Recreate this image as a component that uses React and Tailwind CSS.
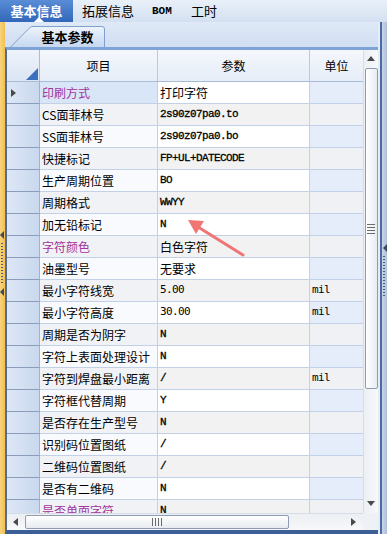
const rows = [
  ['印刷方式', '打印字符', '', 'cn', true],
  ['CS面菲林号', '2s90z07pa0.to', '', 'serif'],
  ['SS面菲林号', '2s90z07pa0.bo', '', 'serif'],
  ['快捷标记', 'FP+UL+DATECODE', '', 'serif'],
  ['生产周期位置', 'BO', '', 'serif'],
  ['周期格式', 'WWYY', '', 'serif'],
  ['加无铅标记', 'N', '', 'serif'],
  ['字符颜色', '白色字符', '', 'cn', true],
  ['油墨型号', '无要求', '', 'cn'],
  ['最小字符线宽', '5.00', 'mil', 'sans'],
  ['最小字符高度', '30.00', 'mil', 'sans'],
  ['周期是否为阴字', 'N', '', 'serif'],
  ['字符上表面处理设计', 'N', '', 'serif'],
  ['字符到焊盘最小距离', '/', 'mil', 'serif'],
  ['字符框代替周期', 'Y', '', 'serif'],
  ['是否存在生产型号', 'N', '', 'serif'],
  ['识别码位置图纸', '/', '', 'serif'],
  ['二维码位置图纸', '/', '', 'serif'],
  ['是否有二维码', 'N', '', 'serif'],
  ['是否单面字符', 'N', '', 'serif', true],
]

const cn = 'font-["Noto_Sans_CJK_SC",sans-serif]'

function Tri({ dir, className }) {
  const pts = {
    up: '0,6 4,1 8,6',
    down: '0,1 4,6 8,1',
    left: '6,0 1,4 6,8',
    right: '1,0 6,4 1,8',
  }[dir]
  return (
    <svg width="8" height="8" viewBox="0 0 8 8" className={className}>
      <polygon points={pts} fill="#4a4a4a" />
    </svg>
  )
}

function Grip() {
  return (
    <div className="flex flex-col items-center gap-[2px]">
      {[...Array(14)].map((_, i) => (
        <div key={i} className="w-[2px] h-[1px] bg-[#4a5f80]" />
      ))}
    </div>
  )
}

function Row({ r, i }) {
  const [label, value, unit, kind, purple] = r
  const odd = i % 2 === 1
  const valFont =
    kind === 'cn'
      ? `${cn} text-[12px]`
      : kind === 'sans'
      ? 'font-["DejaVu_Sans_Mono",monospace] text-[11px] tracking-[-0.6px]'
      : 'font-["Liberation_Mono",monospace] text-[11px] tracking-[-0.6px] [-webkit-text-stroke:0.3px_black]'
  return (
    <div className="flex h-[22px] shrink-0">
      <div className="w-[33px] flex items-center pl-[3px] bg-gradient-to-r from-[#dde7f6] to-[#c9d8ee] border-b border-[#8b9dba] border-r border-r-[#9fb3d1]">
        {i === 0 && <Tri dir="right" />}
      </div>
      <div
        className={`w-[118px] flex items-center pl-[2px] border-b border-r border-[#c2d1e5] ${cn} text-[12px] whitespace-nowrap overflow-hidden ${
          purple ? 'text-[#a2339e]' : 'text-black'
        } ${i === 0 ? 'bg-[#d8e6f7]' : odd ? 'bg-[#f0f2f6]' : 'bg-[#f9fafd]'}`}
      >
        {label}
      </div>
      <div
        className={`w-[152px] flex items-center pl-[2px] border-b border-r border-[#c2d1e5] text-black whitespace-nowrap ${valFont} ${
          odd ? 'bg-[#f2f2f2]' : 'bg-white'
        }`}
      >
        {value}
      </div>
      <div
        className={`w-[53px] flex items-center pl-[2px] border-b border-[#c2d1e5] font-["DejaVu_Sans_Mono",monospace] text-[11px] tracking-[-0.6px] text-black ${
          odd ? 'bg-[#eff1f4]' : 'bg-[#e4edf9]'
        }`}
      >
        {unit}
      </div>
    </div>
  )
}

export default function App() {
  return (
    <div className={`relative w-[387px] h-[534px] overflow-hidden bg-[#dde8f6] ${cn}`}>
      {/* Menu */}
      <div className="flex items-stretch h-[22px] bg-gradient-to-b from-[#e9f0f9] to-[#d3e0f1] text-[13px]">
        <div className="relative w-[73px] flex items-center justify-center bg-gradient-to-b from-[#5a8dd6] to-[#3267ba] text-white font-bold">
          基本信息
          <div className="absolute bottom-0 left-[34px] w-0 h-0 border-l-[5px] border-r-[5px] border-b-[5px] border-l-transparent border-r-transparent border-b-white" />
        </div>
        <div className="flex items-center pl-[9px] w-[79px] text-black">拓展信息</div>
        <div className="flex items-center w-[39px] font-['Liberation_Mono',monospace] text-[11px] font-bold text-black">BOM</div>
        <div className="flex items-center text-black">工时</div>
      </div>

      <div className="flex h-[512px]">
        {/* left dock strip */}
        <div className="relative w-[5px] bg-gradient-to-r from-[#f9d47a] to-[#f2bf52]">
          <div className="absolute left-0 top-[209px]"><svg width="4" height="8"><polygon points="4,0 0,4 4,8" fill="#3c4a60" /></svg></div>
          <div className="absolute left-[1px] top-[221px]"><Grip /></div>
          <div className="absolute left-0 top-[266px]"><svg width="4" height="8"><polygon points="4,0 0,4 4,8" fill="#3c4a60" /></svg></div>
        </div>

        <div className="flex flex-col w-[373px]">
          {/* sub-tab row */}
          <div className="h-[25px] flex items-end bg-gradient-to-b from-[#dfe9f7] to-[#d0def2] pl-[5px]">
            <div className="relative h-[21px] w-[95px]">
              <svg width="95" height="21" className="absolute inset-0">
                <defs>
                  <linearGradient id="tg" x1="0" y1="0" x2="0" y2="1">
                    <stop offset="0" stopColor="#eef4fc" />
                    <stop offset="1" stopColor="#c6d8f0" />
                  </linearGradient>
                </defs>
                <path d="M0.5,21 L20,1.5 Q21,0.5 23,0.5 L92,0.5 Q94.5,0.5 94.5,3 L94.5,21" fill="url(#tg)" stroke="#7f9fcc" />
              </svg>
              <div className="absolute inset-0 flex items-center justify-center pl-[20px] pt-[1px] text-[13px] font-bold text-black">
                基本参数
              </div>
            </div>
          </div>

          {/* grid */}
          <div className="flex-1 flex flex-col border-t-[3px] border-[#7ea3d6] border-l-2 border-l-[#5b6c88] border-b-4 border-b-[#3d5f98]">
            <div className="flex h-[463px]">
              <div className="w-[356px] flex flex-col overflow-hidden bg-white">
                {/* header */}
                <div className="flex h-[32px] shrink-0 bg-gradient-to-b from-[#f4f7fc] to-[#e6edf7] border-b border-[#a9bcd8] text-[12px] text-black">
                  <div className="relative w-[33px] bg-gradient-to-b from-[#eef3fb] to-[#dbe5f4] border-r border-[#a9bcd8]">
                    <svg width="12" height="12" className="absolute right-[1px] bottom-[1px]">
                      <polygon points="12,0 12,12 0,12" fill="#3d6fc0" />
                    </svg>
                  </div>
                  <div className="w-[118px] flex items-center justify-center border-r border-[#b9c9de]">项目</div>
                  <div className="w-[152px] flex items-center justify-center border-r border-[#b9c9de]">参数</div>
                  <div className="w-[53px] flex items-center justify-center">单位</div>
                </div>
                {rows.map((r, i) => (
                  <Row key={i} r={r} i={i} />
                ))}
              </div>

              {/* vertical scrollbar */}
              <div className="w-[15px] flex flex-col items-center bg-gradient-to-r from-[#eceff3] to-[#f7f8fa] border-l border-[#d6dde7]">
                <div className="h-[18px] flex items-center justify-center"><Tri dir="up" /></div>
                <div className="w-[13px] h-[321px] rounded-[2px] border border-[#8e9bb0] bg-gradient-to-r from-white to-[#e7ebf0] flex items-center justify-center">
                  <div className="flex flex-col gap-[2px]">
                    <div className="w-[8px] h-[1px] bg-[#6b6b6b]" />
                    <div className="w-[8px] h-[1px] bg-[#6b6b6b]" />
                    <div className="w-[8px] h-[1px] bg-[#6b6b6b]" />
                    <div className="w-[8px] h-[1px] bg-[#6b6b6b]" />
                  </div>
                </div>
                <div className="flex-1" />
                <div className="h-[18px] flex items-center justify-center"><Tri dir="down" /></div>
              </div>
            </div>

            {/* horizontal scrollbar */}
            <div className="flex h-[17px]">
              <div className="w-[356px] flex items-center bg-gradient-to-b from-[#eceff3] to-[#f7f8fa] border-t border-[#d6dde7]">
                <div className="w-[18px] flex justify-center"><Tri dir="left" /></div>
                <div className="w-[264px] h-[14px] rounded-[2px] border border-[#8e9bb0] bg-gradient-to-b from-white to-[#e7ebf0] flex items-center justify-center gap-[2px]">
                  <div className="w-[1px] h-[8px] bg-[#6b6b6b]" />
                  <div className="w-[1px] h-[8px] bg-[#6b6b6b]" />
                  <div className="w-[1px] h-[8px] bg-[#6b6b6b]" />
                  <div className="w-[1px] h-[8px] bg-[#6b6b6b]" />
                </div>
                <div className="flex-1" />
                <div className="w-[18px] flex justify-center"><Tri dir="right" /></div>
              </div>
              <div className="w-[15px] bg-[#eef1f5]" />
            </div>
          </div>
        </div>

        {/* right dock strip */}
        <div className="flex w-[9px]">
          <div className="w-[2px] bg-[#e6edf6]" />
          <div className="w-[2px] bg-[#4a6ca6]" />
          <div className="relative w-[5px] bg-gradient-to-r from-[#c9d6e8] to-[#aebfd8]">
            <div className="absolute left-[1px] top-[222px]"><svg width="4" height="8"><polygon points="4,0 0,4 4,8" fill="#3c4a60" /></svg></div>
            <div className="absolute left-[1px] top-[234px]"><Grip /></div>
          </div>
        </div>
      </div>

      {/* annotation arrow */}
      <svg width="70" height="50" viewBox="0 0 70 50" className="absolute left-[182px] top-[212px] pointer-events-none">
        <line x1="61" y1="43" x2="16" y2="15" stroke="#f07575" strokeWidth="3" strokeLinecap="round" />
        <polygon points="6,8 22,9 14,22" fill="#f07575" />
      </svg>
    </div>
  )
}
